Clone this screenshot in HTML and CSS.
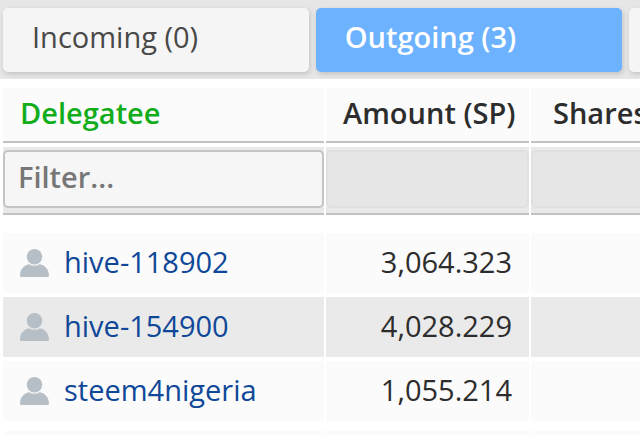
FILE: index.html
```html
<!DOCTYPE html>
<html lang="en">
<head>
<meta charset="utf-8">
<title>Delegations</title>
<link rel="stylesheet" href="styles.css">
</head>
<body>
<svg class="defs" aria-hidden="true">
  <symbol id="user" viewBox="0 0 30 29">
    <path d="M1 29Q0 29 0 27.500C0 21 4 17 9.500 15.800Q15 18.800 20.500 15.800C26 17 30 21 30 27.500Q30 29 29 29Z"/>
    <circle cx="15" cy="8" r="8"/>
    <path class="neck" d="M8.500 15.500Q15 19.500 21.500 15.500"/>
  </symbol>
</svg>
<nav class="tabs">
  <button class="tab" type="button">Incoming (0)</button>
  <button class="tab active" type="button">Outgoing (3)</button>
  <button class="tab" type="button" aria-label="More"></button>
</nav>
<main class="scroller">
  <table class="grid">
    <colgroup><col class="c-name"><col class="c-amount"><col></colgroup>
    <thead>
      <tr class="heads">
        <th class="sorted" scope="col">Delegatee</th>
        <th class="num" scope="col">Amount (SP)</th>
        <th class="shares" scope="col">Shares</th>
      </tr>
      <tr class="filters">
        <td><input class="filter" type="text" placeholder="Filter..." aria-label="Filter delegatee"></td>
        <td><input class="filter off" type="text" disabled aria-label="Filter amount"></td>
        <td><input class="filter off" type="text" disabled aria-label="Filter shares"></td>
      </tr>
    </thead>
    <tbody>
      <tr>
        <td><a class="user" href="#"><svg class="icon" aria-hidden="true"><use href="#user"/></svg>hive-118902</a></td>
        <td class="num">3,064.323</td><td></td>
      </tr>
      <tr class="alt">
        <td><a class="user" href="#"><svg class="icon" aria-hidden="true"><use href="#user"/></svg>hive-154900</a></td>
        <td class="num">4,028.229</td><td></td>
      </tr>
      <tr>
        <td><a class="user" href="#"><svg class="icon" aria-hidden="true"><use href="#user"/></svg>steem4nigeria</a></td>
        <td class="num">1,055.214</td><td></td>
      </tr>
    </tbody>
    <tfoot><tr><td></td><td></td><td></td></tr></tfoot>
  </table>
</main>
</body>
</html>
```
FILE: styles.css
```css
* { box-sizing: border-box; }
body {
  margin: 0;
  overflow: hidden;
  background: #fff;
  color: #2d2d2d;
  font: 29px/40px "Open Sans", "Noto Sans", sans-serif;
}
.defs { display: none; }
.tabs {
  display: flex;
  gap: 7px;
  padding: 8px 0 7px 3px;
  background: #e6e6e6;
  overflow: hidden;
}
.tab {
  flex: 0 0 48%;
  height: 64px;
  padding: 0 29px 6px;
  border: 0;
  border-radius: 5px;
  background: #f5f5f5;
  box-shadow: 1px 2px 5px rgba(0, 0, 0, .16);
  color: #484848;
  font: inherit;
  text-align: left;
}
.tab.active {
  background: #6cb2ff;
  color: #fff;
  font-weight: 600;
}
.scroller { padding: 5px 0 0 1px; overflow: hidden; }
.grid {
  width: 125%;
  table-layout: fixed;
  border-collapse: separate;
  border-spacing: 2px 4px;
}
.c-name { width: 321px; }
.c-amount { width: 203px; }
.grid th, .grid td {
  height: 60px;
  padding: 0 17px 3px;
  background: #fbfbfb;
  text-align: left;
  vertical-align: middle;
  white-space: nowrap;
}
.grid .heads th {
  height: 55px;
  border-bottom: 2px solid #c2c2c2;
  font-weight: 600;
}
.grid .num { text-align: right; }
.grid .heads .num { padding-right: 14px; }
.grid .heads .shares { padding-left: 22px; }
.grid .heads .sorted { color: #12ad1b; }
.grid .filters td {
  height: 68px;
  padding: 3px 0 5px;
  border-bottom: 2px solid #c2c2c2;
  background: #e9e9e9;
}
.filter {
  display: block;
  width: 100%;
  height: 58px;
  padding: 0 13px 5px;
  border: 2px solid #c4c4c4;
  border-radius: 5px;
  background: #f6f6f6;
  color: #2d2d2d;
  font: inherit;
  font-weight: 600;
}
.filter::placeholder { color: #777; opacity: 1; }
.filter.off { border-color: #e0e0e0; background: #e6e6e6; }
.grid tbody::before {
  content: "";
  display: table-row;
  height: 10px;
}
.grid .alt td { background: #eaeaea; }
.user {
  display: flex;
  align-items: center;
  gap: 15px;
  color: #0f4898;
  text-decoration: none;
}
.icon {
  flex: none;
  width: 29px;
  height: 28px;
  margin-top: 3px;
  fill: #b7bfc6;
}
.neck {
  fill: none;
  stroke: #d3d8dc;
  stroke-width: 1;
}
.grid tfoot::before {
  content: "";
  display: table-row;
  height: 2px;
}
```
